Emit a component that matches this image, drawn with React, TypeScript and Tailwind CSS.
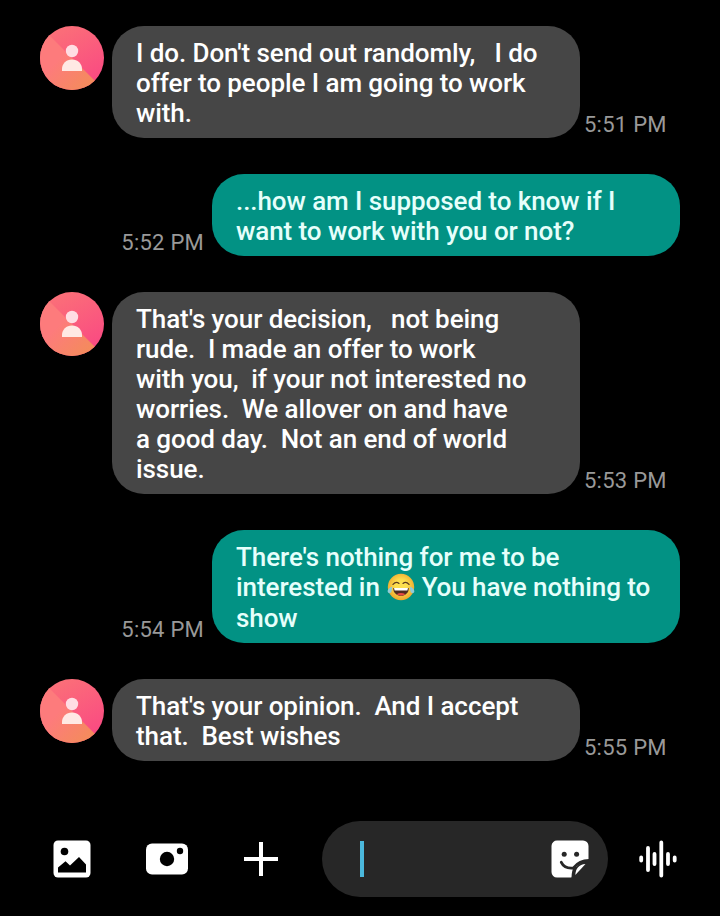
import type { ReactNode } from 'react'

type Message = {
  id: number
  sent?: boolean
  time: string
  lines: ReactNode[]
}

function LaughEmoji() {
  return (
    <svg viewBox="0 0 28 28" className="inline-block w-7 h-7 ml-px -mt-1 align-middle" role="img" aria-label="laughing with tears">
      <defs>
        <radialGradient id="face" cx="50%" cy="45%" r="55%">
          <stop offset="0.4" stopColor="#fde04f" />
          <stop offset="1" stopColor="#eda62c" />
        </radialGradient>
      </defs>
      <circle cx="14" cy="14" r="13.2" fill="url(#face)" />
      <path d="M6 11.4q3-3.400 6-1M16 10.400q3-2.400 6 1" fill="none" stroke="#5b3b20" strokeWidth="1.3" strokeLinecap="round" />
      <path d="M6.300 15h15.400c.3 4.600-3.200 7.800-7.700 7.800S6 19.600 6.300 15z" fill="#4f2c20" />
      <path d="M7 15h14l-.6 2.600H7.600z" fill="#fff" />
      <path d="M9.500 21.300q4.500-2.800 9 0-4.500 2.400-9 0z" fill="#e84a42" />
      <path d="M5.200 13.800C2.600 14.500.3 16.600.7 18.800c.4 1.800 2.900 1.800 3.700-.1.500-1.300.5-3.100.8-4.900zM22.800 13.800c2.600.7 4.900 2.800 4.500 5-.4 1.800-2.900 1.800-3.700-.1-.5-1.300-.5-3.100-.8-4.900z" fill="#8fcbd8" />
    </svg>
  )
}

const messages: Message[] = [
  {
    id: 1,
    time: '5:51 PM',
    lines: ["I do. Don't send out randomly,   I do", 'offer to people I am going to work', 'with.'],
  },
  {
    id: 2,
    sent: true,
    time: '5:52 PM',
    lines: ['...how am I supposed to know if I', 'want to work with you or not?'],
  },
  {
    id: 3,
    time: '5:53 PM',
    lines: [
      "That's your decision,   not being",
      'rude.  I made an offer to work',
      'with you,  if your not interested no',
      'worries.  We allover on and have',
      'a good day.  Not an end of world',
      'issue.',
    ],
  },
  {
    id: 4,
    sent: true,
    time: '5:54 PM',
    lines: ["There's nothing for me to be", <>interested in <LaughEmoji /> You have nothing to</>, 'show'],
  },
  {
    id: 5,
    time: '5:55 PM',
    lines: ["That's your opinion.  And I accept", 'that.  Best wishes'],
  },
]

function Avatar() {
  return (
    <svg viewBox="0 0 64 64" className="w-16 h-16 mr-2 shrink-0 self-start">
      <defs>
        <clipPath id="avatar-clip">
          <circle cx="32" cy="32" r="32" />
        </clipPath>
        <linearGradient id="avatar-pink" x1="0.3" y1="0" x2="0.8" y2="0.9">
          <stop offset="0" stopColor="#fb7078" />
          <stop offset="1" stopColor="#fa4a82" />
        </linearGradient>
        <linearGradient id="avatar-coral" x1="0.3" y1="0.5" x2="0.8" y2="1">
          <stop offset="0" stopColor="#fd7b7c" />
          <stop offset="1" stopColor="#f38d58" />
        </linearGradient>
      </defs>
      <g clipPath="url(#avatar-clip)">
        <path d="M0 0h64v64H0z" fill="url(#avatar-pink)" />
        <path d="M0 0l64 64H0z" fill="url(#avatar-coral)" />
      </g>
      <circle cx="32" cy="25" r="6.200" fill="#ffdde3" />
      <path d="M22 45v-2c0-5.300 4.200-9.500 10-9.500S42 37.700 42 43v2z" fill="#ffe9e4" />
    </svg>
  )
}

function MessageRow({ message }: { message: Message }) {
  const { sent, time, lines } = message

  return (
    <div className={`flex items-end ${sent ? 'flex-row-reverse' : ''}`}>
      {!sent && <Avatar />}
      <div
        className={`w-[468px] shrink-0 rounded-[32px] px-6 pt-3 pb-2.5 text-[26px] leading-[30px] tracking-[-0.07px] font-medium whitespace-pre ${
          sent ? 'bg-[#029284] text-[#e6fffb]' : 'bg-[#464646] text-white'
        }`}
      >
        {lines.map((line, i) => (
          // a line with an emoji in it is one pixel taller
          <p key={i} className={typeof line === 'string' ? '' : 'h-[31px]'}>
            {line}
          </p>
        ))}
      </div>
      <span className={`text-[22px] leading-[26px] tracking-[0.25px] text-[#999] whitespace-nowrap ${sent ? 'mr-2' : 'ml-1'}`}>
        {time}
      </span>
    </div>
  )
}

function Composer() {
  return (
    <div className="flex items-center h-[76px] pl-[53px]">
      {/* Gallery */}
      <svg viewBox="0 0 38 38" className="w-[38px] h-[38px] shrink-0">
        <rect x="0.500" y="0.500" width="37" height="37" rx="4.500" fill="#fff" />
        <circle cx="11.500" cy="11.500" r="3.800" fill="#000" />
        <path d="M5 32.500V27.500l7.500-6.200 4.500 4.200L26 17l7 7.500v8z" fill="#000" />
      </svg>

      {/* Camera */}
      <svg viewBox="0 0 42 32" className="w-[42px] h-8 ml-[55px] shrink-0">
        <rect y="0.500" width="42" height="31" rx="6" fill="#fff" />
        <circle cx="21" cy="16" r="7.200" fill="#000" />
        <circle cx="34" cy="8" r="3.200" fill="#000" />
      </svg>

      {/* Attach */}
      <svg viewBox="0 0 34 34" className="w-[34px] h-[34px] ml-14 shrink-0">
        <path d="M17 0v34M0 17h34" stroke="#fff" strokeWidth="4" />
      </svg>

      {/* Text field */}
      <div className="flex items-center justify-between w-[286px] h-[76px] ml-11 pl-[38px] pr-[19px] rounded-full bg-[#272727] shrink-0">
        <div className="w-1 h-9 bg-[#4bb8dc]" />
        <svg viewBox="0 0 38 38" className="w-[38px] h-[38px]">
          <path d="M6.500 .5h25.500a5.500 5.500 0 0 1 5.500 5.500v13.500L25 27l-4.500 10.500H6A5.500 5.500 0 0 1 .5 32V6A5.500 5.500 0 0 1 6.500 .5z" fill="#fff" />
          <path d="M38 21c-8 0-15.500 5.500-15.500 17H38z" fill="#272727" />
          <circle cx="13.200" cy="14.200" r="2.500" fill="#272727" />
          <circle cx="25.600" cy="14.200" r="2.500" fill="#272727" />
          <path d="M10.300 22.300c2.200 4.500 7 6.200 12.200 5.600 3.500-4.400 8.500-7.400 15.500-7.400M22 38c-.1-4 .4-7.500 2-10" fill="none" stroke="#272727" strokeWidth="2.800" strokeLinecap="round" />
          <path d="M24.300 35c.3-6.500 3.700-10.500 10.200-11z" fill="#fff" />
        </svg>
      </div>

      {/* Voice */}
      <svg viewBox="0 0 38 38" className="w-[38px] h-[38px] ml-[31px] shrink-0">
        <path d="M2.200 17.500v3M9 8v22M15.500 14v10M22.300 2.500v33M29 14v10M35.700 17.500v3" stroke="#fff" strokeWidth="3.800" strokeLinecap="round" />
      </svg>
    </div>
  )
}

export default function App() {
  return (
    <div className="w-[720px] h-[916px] bg-black overflow-hidden font-[Roboto,sans-serif]">
      <div className="flex flex-col gap-9 h-[821px] px-10 pt-[26px]">
        {messages.map((message) => (
          <MessageRow key={message.id} message={message} />
        ))}
      </div>
      <Composer />
    </div>
  )
}
